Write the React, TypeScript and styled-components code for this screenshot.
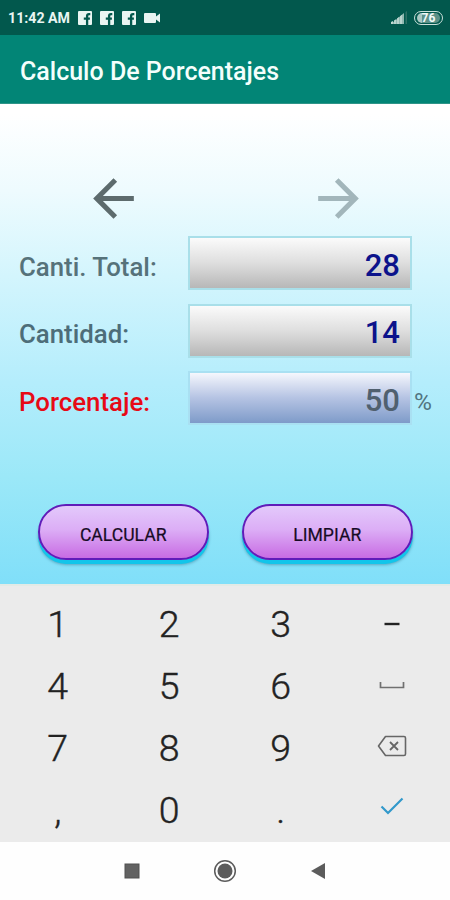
import React from 'react';
import styled, { createGlobalStyle } from 'styled-components';

const GlobalStyle = createGlobalStyle`
  * { box-sizing: border-box; }
  body { margin: 0; font-family: Roboto, "Noto Sans", sans-serif; }
  svg { display: block; }
`;

const Screen = styled.div`
  width: 450px;
  height: 900px;
  display: flex;
  flex-direction: column;
  overflow: hidden;
`;

const StatusBar = styled.header`
  height: 35px;
  flex: none;
  padding: 0 7px 0 8px;
  display: flex;
  align-items: center;
  justify-content: space-between;
  background: #02584d;
  color: #e9f5f2;
`;

const StatusGroup = styled.div<{ $gap: number }>`
  display: flex;
  align-items: center;
  gap: ${(p) => p.$gap}px;
`;

const Clock = styled.span`
  width: 62px;
  font-size: 14.2px;
  font-weight: 700;
  line-height: 16px;
  white-space: nowrap;
`;

const Battery = styled.span`
  width: 29px;
  height: 14px;
  border: 1.5px solid #c9dfda;
  border-radius: 7px;
  padding: 1px 2px;
  display: flex;
`;

const BatteryFill = styled.span`
  flex: 1;
  border-radius: 5px;
  background: linear-gradient(90deg, #a9c8c2 22%, #5c9188 22%);
  color: #f1faf8;
  font-size: 12px;
  font-weight: 700;
  line-height: 10px;
  text-align: center;
`;

const AppBar = styled.div`
  height: 69px;
  flex: none;
  padding: 5px 20px 0;
  display: flex;
  align-items: center;
  background: #028576;
  border-bottom: 1px solid #2f9488;
`;

const Title = styled.h1`
  margin: 0;
  color: #f4fffc;
  font-size: 25px;
  font-weight: 500;
  line-height: 30px;
  white-space: nowrap;
`;

const Content = styled.main`
  height: 480px;
  flex: none;
  padding-top: 64px;
  display: flex;
  flex-direction: column;
  background: linear-gradient(180deg, #ffffff 2%, #eefbfe 18%, #d3f5fd 36%, #b4edfc 58%, #9be8f8 78%, #80dff9 100%);
`;

const ArrowRow = styled.div`
  display: flex;
  justify-content: space-between;
  padding: 0 81.5px 0 82.5px;
`;

const ArrowButton = styled.button<{ $tone: string }>`
  width: 61px;
  height: 61px;
  padding: 0;
  border: 0;
  background: none;
  color: ${(p) => p.$tone};
`;

const Form = styled.div`
  display: flex;
  flex-direction: column;
  gap: 13.5px;
  padding: 7px 0 0 19px;
`;

const Row = styled.div`
  height: 54px;
  display: flex;
  align-items: center;
`;

const Label = styled.label<{ $tone: string }>`
  width: 169px;
  padding-top: 7px;
  color: ${(p) => p.$tone};
  font-size: 25.8px;
  font-weight: 500;
  line-height: 30px;
  white-space: nowrap;
`;

const Field = styled.output<{ $result?: boolean }>`
  width: 224px;
  height: 54px;
  padding: 1.5px 10px 0 0;
  border: 2px solid ${(p) => (p.$result ? '#a9e0f2' : '#a9dfe9')};
  background: ${(p) =>
    p.$result
      ? 'linear-gradient(#f5f7fd, #b5c3e3 50%, #7e9bc9)'
      : 'linear-gradient(#fbfbfb, #dedede 50%, #b7b7b7)'};
  color: ${(p) => (p.$result ? '#50606f' : '#0c138b')};
  font-size: 31px;
  font-weight: 500;
  line-height: 51px;
  text-align: right;
`;

const Unit = styled.span`
  padding: 7px 0 0 2px;
  color: #51747f;
  font-size: 24.5px;
  line-height: 28px;
`;

const ButtonRow = styled.div`
  display: flex;
  gap: 33.5px;
  padding: 79px 0 0 38px;
`;

const PillButton = styled.button`
  width: 170.5px;
  height: 56px;
  padding: 6px 0 0;
  border: 2px solid #601cb9;
  border-radius: 28px;
  background: linear-gradient(#e3c9fb, #dcaef6 45%, #c86be3);
  box-shadow: 0 4px 0 #12c5ea, 0 5px 3px #58a6c0;
  color: #170b25;
  font-family: inherit;
  font-size: 17.6px;
  font-weight: 400;
  -webkit-text-stroke: 0.2px #170b25;
`;

const Keypad = styled.section`
  height: 258px;
  flex: none;
  display: grid;
  grid-template-columns: repeat(4, 111.5px);
  grid-template-rows: repeat(4, 62.2px);
  padding: 6.5px 0 0 2px;
  background: #ebebeb;
  border-top: 2px solid #e2eae6;
`;

const Key = styled.button`
  padding: 0;
  border: 0;
  background: none;
  display: flex;
  align-items: center;
  justify-content: center;
  color: #222;
  font-family: inherit;
  font-size: 37.5px;
  font-weight: 300;
  -webkit-text-stroke: 0.4px #222;
`;

const NavBar = styled.nav`
  height: 58px;
  flex: none;
  display: grid;
  grid-template-columns: repeat(3, 93px);
  justify-content: center;
  align-items: center;
  justify-items: center;
  background: #fefefe;
`;

const FacebookIcon = () => (
  <svg width="14" height="14" viewBox="0 0 14 14">
    <rect width="14" height="14" rx="1" fill="#e9f5f2" />
    <path d="M12.300 3.200h-1.300c-1.300 0-1.900.7-1.900 1.900V14M5.800 7.600h6.100" fill="none" stroke="#02584d" strokeWidth="2.300" />
  </svg>
);

const VideoIcon = () => (
  <svg width="17" height="10" viewBox="0 0 17 10">
    <path d="M1 0h10a1 1 0 0 1 1 1v2.4L16 .6v8.8l-4-2.8V9a1 1 0 0 1-1 1H1a1 1 0 0 1-1-1V1a1 1 0 0 1 1-1z" fill="#e9f5f2" />
  </svg>
);

const SignalIcon = () => (
  <svg width="18" height="13" viewBox="0 0 18 13">
    <path d="M1 13v-2l2-1v3zM4 13V9.500l2-1.300V13zM7 13V7.500l2-1.500v7zM10 13V5.300l2-1.500V13z" fill="#c4dad5" />
    <path d="M1 13L14 2v11z" fill="#b7d2cc" opacity=".8" />
    <path d="M15.500 1v12H17V0z" fill="#2f7066" />
  </svg>
);

const BackArrow = () => (
  <svg width="61" height="61" viewBox="0 0 24 24">
    <path d="M20 11H7.830l5.590-5.590L12 4l-8 8 8 8 1.410-1.410L7.830 13H20z" fill="currentColor" />
  </svg>
);

const ForwardArrow = () => (
  <svg width="61" height="61" viewBox="0 0 24 24">
    <path d="M12 4l-1.410 1.410L16.170 11H4v2h12.170l-5.580 5.590L12 20l8-8z" fill="currentColor" />
  </svg>
);

const MinusIcon = () => (
  <svg width="16" height="4" viewBox="0 0 16 4">
    <path d="M.5 2h15" stroke="#222" strokeWidth="2.400" />
  </svg>
);

const SpaceIcon = () => (
  <svg width="26" height="8" viewBox="0 0 26 8">
    <path d="M1.500 1v5.500h23V1" fill="none" stroke="#707070" strokeWidth="1.700" />
  </svg>
);

const DeleteIcon = () => (
  <svg width="30" height="22" viewBox="0 0 30 22">
    <path d="M8.500 1.500h18.500a1.500 1.500 0 0 1 1.500 1.500v16a1.500 1.500 0 0 1-1.500 1.500H8.500L1.500 11z" fill="none" stroke="#666" strokeWidth="1.600" strokeLinejoin="round" />
    <path d="M13 7l8 8M21 7l-8 8" stroke="#666" strokeWidth="1.800" />
  </svg>
);

const CheckIcon = () => (
  <svg width="24" height="18" viewBox="0 0 24 18">
    <path d="M1.500 9.500l6.500 6.500L22.500 1.500" fill="none" stroke="#3299cb" strokeWidth="2.200" />
  </svg>
);

const IconSlot = styled.span<{ $lift: number }>`
  display: block;
  padding-bottom: ${(p) => p.$lift * 2}px;
`;

const FIELDS = [
  { label: 'Canti. Total:', value: '28', tone: '#56727a' },
  { label: 'Cantidad:', value: '14', tone: '#4d6d79' },
  { label: 'Porcentaje:', value: '50', tone: '#e70a16', unit: '%' },
];

const KEYS: { id: string; face: React.ReactNode }[] = [
  { id: '1', face: '1' },
  { id: '2', face: '2' },
  { id: '3', face: '3' },
  { id: 'minus', face: <IconSlot $lift={0}><MinusIcon /></IconSlot> },
  { id: '4', face: '4' },
  { id: '5', face: '5' },
  { id: '6', face: '6' },
  { id: 'space', face: <IconSlot $lift={0.5}><SpaceIcon /></IconSlot> },
  { id: '7', face: '7' },
  { id: '8', face: '8' },
  { id: '9', face: '9' },
  { id: 'delete', face: <IconSlot $lift={1.5}><DeleteIcon /></IconSlot> },
  { id: 'comma', face: ',' },
  { id: '0', face: '0' },
  { id: 'point', face: '.' },
  { id: 'done', face: <IconSlot $lift={4.5}><CheckIcon /></IconSlot> },
];

export default function App() {
  return (
    <Screen>
      <GlobalStyle />
      <StatusBar>
        <StatusGroup $gap={8}>
          <Clock>11:42 AM</Clock>
          <FacebookIcon />
          <FacebookIcon />
          <FacebookIcon />
          <VideoIcon />
        </StatusGroup>
        <StatusGroup $gap={6}>
          <SignalIcon />
          <Battery>
            <BatteryFill>76</BatteryFill>
          </Battery>
        </StatusGroup>
      </StatusBar>
      <AppBar>
        <Title>Calculo De Porcentajes</Title>
      </AppBar>
      <Content>
        <ArrowRow>
          <ArrowButton $tone="#5d6b6d"><BackArrow /></ArrowButton>
          <ArrowButton $tone="#a2b6bb"><ForwardArrow /></ArrowButton>
        </ArrowRow>
        <Form>
          {FIELDS.map((f) => (
            <Row key={f.label}>
              <Label $tone={f.tone}>{f.label}</Label>
              <Field $result={!!f.unit}>{f.value}</Field>
              {f.unit && <Unit>{f.unit}</Unit>}
            </Row>
          ))}
        </Form>
        <ButtonRow>
          <PillButton>CALCULAR</PillButton>
          <PillButton>LIMPIAR</PillButton>
        </ButtonRow>
      </Content>
      <Keypad>
        {KEYS.map((k) => (
          <Key key={k.id}>{k.face}</Key>
        ))}
      </Keypad>
      <NavBar>
        <svg width="16" height="16" viewBox="0 0 16 16">
          <rect x="1" y="1" width="14" height="14" fill="#626262" stroke="#505050" />
        </svg>
        <svg width="24" height="24" viewBox="0 0 24 24">
          <circle cx="12" cy="12" r="10.300" fill="none" stroke="#5c5c5c" strokeWidth="1.500" />
          <circle cx="12" cy="12" r="7.500" fill="#5c5c5c" />
        </svg>
        <svg width="16" height="18" viewBox="0 0 16 18">
          <path d="M1 9L15 1v16z" fill="#5c5c5c" />
        </svg>
      </NavBar>
    </Screen>
  );
}
